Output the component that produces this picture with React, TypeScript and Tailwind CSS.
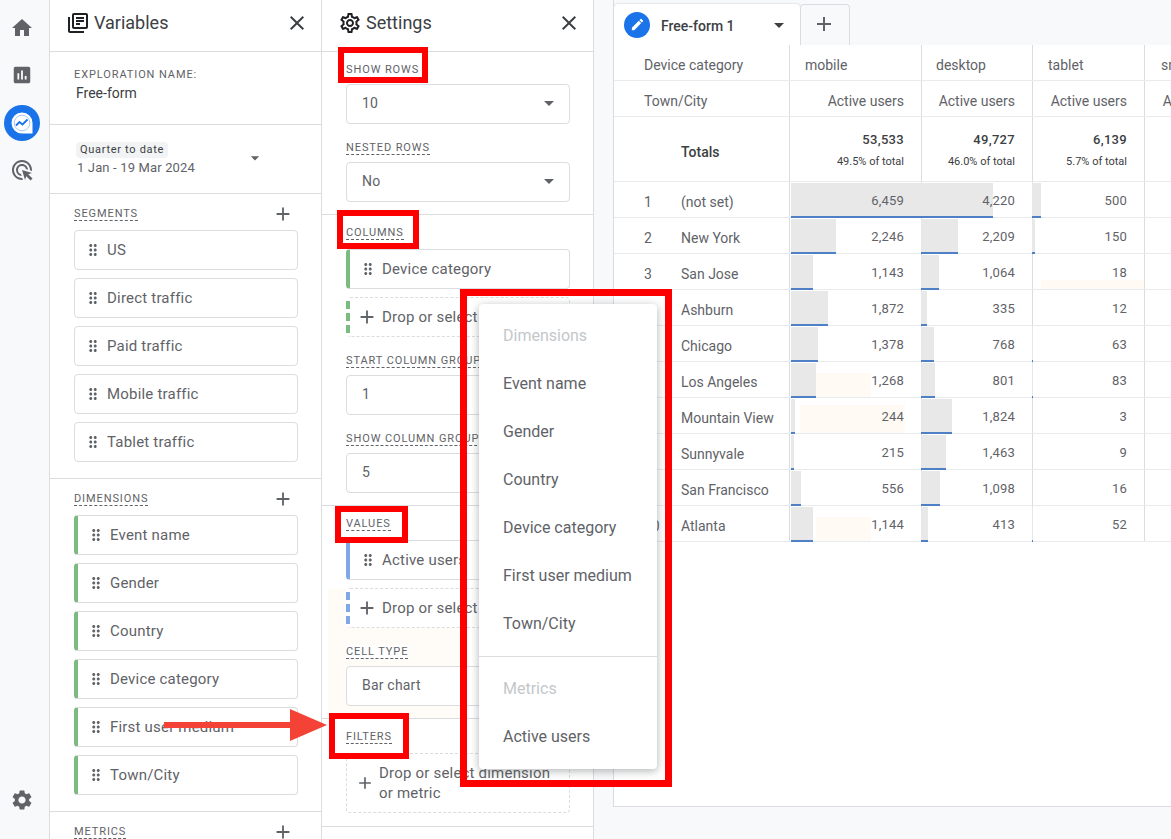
import type { ReactNode } from 'react';
import {
  MdAdd,
  MdAdsClick,
  MdArrowDropDown,
  MdAssessment,
  MdClose,
  MdDragIndicator,
  MdEdit,
  MdHome,
  MdOutlineLibraryBooks,
  MdOutlineSettings,
  MdSettings,
} from 'react-icons/md';

function Label({ children, dashed = true }: { children: ReactNode; dashed?: boolean }) {
  return (
    <div
      className={`w-fit text-[11px] leading-[13px] tracking-[0.9px] uppercase text-[#5f6368] ${
        dashed ? 'border-b border-dashed border-[#5f6368]' : ''
      }`}
    >
      {children}
    </div>
  );
}

function PanelHeader({ icon, title }: { icon: ReactNode; title: string }) {
  return (
    <div className="h-[52px] shrink-0 flex items-center pl-4 pr-3 pb-[6px] border-b border-[#dadce0]">
      <span className="text-[#202124]">{icon}</span>
      <span className="ml-1 text-[18px] text-[#3c4043] flex-1">{title}</span>
      <MdClose size={24} className="text-[#3c4043]" />
    </div>
  );
}

function Chip({ children, color }: { children: string; color?: 'green' | 'blue' }) {
  const edge = color === 'green' ? 'border-l-4 border-l-[#7cbb7f]' : color === 'blue' ? 'border-l-4 border-l-[#7fa9e6]' : '';
  return (
    <div className={`h-10 flex items-center border border-[#dadce0] rounded bg-white pl-[9px] ${edge}`}>
      <MdDragIndicator size={18} className="text-[#5f6368] shrink-0" />
      <span className="ml-[5px] text-[15px] tracking-[0.2px] whitespace-nowrap text-[#5f6368]">{children}</span>
    </div>
  );
}

function SelectBox({ value, arrow = true }: { value: string; arrow?: boolean }) {
  return (
    <div className="h-10 flex items-center justify-between pl-[15px] pr-2 border border-[#dadce0] rounded bg-white">
      <span className="-mt-[2px] text-sm tracking-[0.2px] text-[#5f6368]">{value}</span>
      {arrow && <MdArrowDropDown size={24} className="-mt-[2px] text-[#5f6368]" />}
    </div>
  );
}

function DropZone({ color }: { color: 'green' | 'blue' }) {
  return (
    <div
      className={`h-10 flex items-center pl-[6px] border border-dashed border-[#dadce0] border-l-4 rounded-sm bg-white ${
        color === 'green' ? 'border-l-[#7cbb7f]' : 'border-l-[#7fa9e6]'
      }`}
    >
      <MdAdd size={22} className="text-[#5f6368] shrink-0" />
      <span className="ml-1 text-[15px] tracking-[0.2px] whitespace-nowrap text-[#5f6368]">Drop or select dimension</span>
    </div>
  );
}

function ListSection({ title, items, color }: { title: string; items: string[]; color?: 'green' }) {
  return (
    <div className="pt-[13px] pb-4 pl-6 pr-[23px] border-b border-[#dadce0]">
      <div className="flex items-center justify-between h-[14px]">
        <Label>{title}</Label>
        <MdAdd size={22} className="text-[#5f6368] mr-1" />
      </div>
      <div className="mt-[9px] flex flex-col gap-2">
        {items.map((item) => (
          <Chip key={item} color={color}>
            {item}
          </Chip>
        ))}
      </div>
    </div>
  );
}

function VariablesPanel() {
  return (
    <div className="w-[272px] shrink-0 border-r border-[#dadce0] bg-white flex flex-col">
      <PanelHeader icon={<MdOutlineLibraryBooks size={24} />} title="Variables" />
      <div className="h-[73px] shrink-0 pl-6 pt-4 border-b border-[#dadce0]">
        <Label dashed={false}>Exploration name:</Label>
        <div className="mt-[2px] ml-[2px] text-sm text-[#3c4043]">Free-form</div>
      </div>
      <div className="h-[69px] shrink-0 pl-[27px] pr-[56px] pt-[17px] border-b border-[#dadce0] flex justify-between">
        <div>
          <div className="w-fit h-[16px] px-1 -ml-[1px] bg-[#f1f3f4] rounded-sm text-[11px] leading-[16px] tracking-[0.7px] text-[#3c4043]">
            Quarter to date
          </div>
          <div className="text-[13px] tracking-[0.15px] text-[#5f6368]">1 Jan - 19 Mar 2024</div>
        </div>
        <MdArrowDropDown size={20} className="text-[#5f6368] mt-[6px]" />
      </div>
      <ListSection title="Segments" items={['US', 'Direct traffic', 'Paid traffic', 'Mobile traffic', 'Tablet traffic']} />
      <ListSection
        title="Dimensions"
        color="green"
        items={['Event name', 'Gender', 'Country', 'Device category', 'First user medium', 'Town/City']}
      />
      <div className="pt-[13px] pl-6 pr-[23px]">
        <div className="flex items-center justify-between h-[14px]">
          <Label>Metrics</Label>
          <MdAdd size={22} className="text-[#5f6368] mr-1" />
        </div>
      </div>
    </div>
  );
}

function SettingsPanel() {
  return (
    <div className="w-[272px] shrink-0 border-r border-[#dadce0] bg-white flex flex-col">
      <PanelHeader icon={<MdOutlineSettings size={24} />} title="Settings" />
      <div className="h-[163px] shrink-0 pt-[11px] pl-6 pr-[23px] border-b border-[#dadce0]">
        <Label dashed={false}>Show rows</Label>
        <div className="mt-2">
          <SelectBox value="10" />
        </div>
        <div className="mt-[17px]">
          <Label>Nested rows</Label>
        </div>
        <div className="mt-[7px]">
          <SelectBox value="No" />
        </div>
      </div>
      <div className="h-[291px] shrink-0 pt-[11px] pl-6 pr-[23px] border-b border-[#dadce0]">
        <Label>Columns</Label>
        <div className="mt-[9px] flex flex-col gap-2">
          <Chip color="green">Device category</Chip>
          <DropZone color="green" />
        </div>
        <div className="mt-[17px]">
          <Label>Start column group</Label>
        </div>
        <div className="mt-[7px]">
          <SelectBox value="1" arrow={false} />
        </div>
        <div className="mt-[17px]">
          <Label>Show column groups</Label>
        </div>
        <div className="mt-[7px]">
          <SelectBox value="5" arrow={false} />
        </div>
      </div>
      <div className="relative h-[213px] shrink-0 pt-[11px] pl-6 pr-[23px] border-b border-[#dadce0]">
        <div className="absolute left-[6px] top-[83px] w-[140px] h-[129px] bg-[#fffcf7]" />
        <div className="relative">
          <Label>Values</Label>
          <div className="mt-[9px] flex flex-col gap-2">
            <Chip color="blue">Active users</Chip>
            <DropZone color="blue" />
          </div>
          <div className="mt-[17px] w-fit bg-white">
            <Label>Cell type</Label>
          </div>
          <div className="mt-[7px]">
            <SelectBox value="Bar chart" />
          </div>
        </div>
      </div>
      <div className="h-[108px] shrink-0 pt-[11px] pl-6 pr-[23px] border-b border-[#dadce0]">
        <Label>Filters</Label>
        <div className="mt-[9px] h-[60px] flex items-center pl-[8px] border border-dashed border-[#dadce0] rounded-sm">
          <MdAdd size={20} className="text-[#5f6368] shrink-0" />
          <span className="ml-[4px] text-[15px] leading-5 tracking-[0.2px] whitespace-nowrap text-[#5f6368]">
            Drop or select dimension
            <br />
            or metric
          </span>
        </div>
      </div>
    </div>
  );
}

// faint cream patches that sit in the table cells of the screenshot
const ghostShort = 'left-[26px] right-[50px] top-[11px] bottom-0';
const ghostWide = 'left-[10px] right-[16px] top-[7px] bottom-0';
const ghostLow = 'left-[8px] right-0 top-[26px] bottom-0';

const rows = [
  { n: '1', city: '(not set)', a: '6,459', ab: 202, b: '4,220', bb: 0, c: '500', cb: 9 },
  { n: '2', city: 'New York', a: '2,246', ab: 45, b: '2,209', bb: 37, c: '150', cb: 3 },
  { n: '3', city: 'San Jose', a: '1,143', ab: 22, b: '1,064', bb: 18, c: '18', cb: 0, ghostC: ghostLow },
  { n: '4', city: 'Ashburn', a: '1,872', ab: 37, b: '335', bb: 6, c: '12', cb: 0 },
  { n: '5', city: 'Chicago', a: '1,378', ab: 27, b: '768', bb: 13, c: '63', cb: 1 },
  { n: '6', city: 'Los Angeles', a: '1,268', ab: 25, b: '801', bb: 14, c: '83', cb: 1, ghostA: ghostShort },
  { n: '7', city: 'Mountain View', a: '244', ab: 4, b: '1,824', bb: 31, c: '3', cb: 0, ghostA: ghostWide },
  { n: '8', city: 'Sunnyvale', a: '215', ab: 3, b: '1,463', bb: 25, c: '9', cb: 0 },
  { n: '9', city: 'San Francisco', a: '556', ab: 10, b: '1,098', bb: 19, c: '16', cb: 0 },
  { n: '10', city: 'Atlanta', a: '1,144', ab: 22, b: '413', bb: 7, c: '52', cb: 1, ghostA: ghostShort },
];

const grid = 'grid grid-cols-[176px_132px_111px_112px_112px] w-[643px] border-b border-[#e8eaed]';
const leftCell = 'relative border-r border-[#dadce0] flex items-center pt-1';
const rightCell = 'relative border-r border-[#dadce0] flex items-center justify-end pr-[17px] pt-1';

function BarCell({ value, width, left, ghost }: { value: string; width: number; left: number; ghost?: string }) {
  return (
    <div className="relative border-r border-[#dadce0] flex items-center justify-end pr-[17px]">
      {ghost && <div className={`absolute bg-[#fffbf4] ${ghost}`} />}
      {width > 0 && (
        <div
          className="absolute top-[1px] -bottom-[1px] bg-[#e8e8e8] border-b-2 border-[#4f7fc4]"
          style={{ width, left }}
        />
      )}
      <span className="relative mt-1 text-[13px] tracking-[0.2px] text-[#5f6368]">{value}</span>
    </div>
  );
}

function DataTable() {
  return (
    <div className="flex-1 bg-white text-[#5f6368] text-sm">
      <div className={`${grid} h-9`}>
        <div className={`${leftCell} pl-[30px]`}>Device category</div>
        <div className={`${leftCell} pl-[15px]`}>mobile</div>
        <div className={`${leftCell} pl-[14px]`}>desktop</div>
        <div className={`${leftCell} pl-[15px]`}>tablet</div>
        <div className={`${leftCell} pl-[16px] whitespace-nowrap`}>smart tv</div>
      </div>
      <div className={`${grid} h-9`}>
        <div className={`${leftCell} pl-[30px]`}>Town/City</div>
        <div className={rightCell}>Active users</div>
        <div className={rightCell}>Active users</div>
        <div className={rightCell}>Active users</div>
        <div className={rightCell}>Active users</div>
      </div>
      <div className={`${grid} h-[65px]`}>
        <div className="border-r border-[#dadce0] flex items-center pl-[67px] pt-[5px] font-medium text-[#3c4043]">Totals</div>
        {[
          ['53,533', '49.5% of total'],
          ['49,727', '46.0% of total'],
          ['6,139', '5.7% of total'],
        ].map(([total, share]) => (
          <div key={total} className="border-r border-[#dadce0] flex flex-col items-end justify-center pr-[17px] pt-[3px]">
            <div className="text-[13px] tracking-[0.3px] font-medium text-[#3c4043]">{total}</div>
            <div className="mt-[4px] text-[11px] text-[#3c4043]">{share}</div>
          </div>
        ))}
        <div className="border-r border-[#dadce0]" />
      </div>
      {rows.map((row) => (
        <div key={row.n} className={`${grid} h-9`}>
          <div className="border-r border-[#dadce0] flex items-center pl-[30px] pt-1 text-[#5f6368]">
            <span className="w-[37px]">{row.n}</span>
            <span>{row.city}</span>
          </div>
          <BarCell value={row.a} width={row.ab} left={1} ghost={row.ghostA} />
          <BarCell value={row.b} width={row.bb} left={-1} />
          <BarCell value={row.c} width={row.cb} left={-1} ghost={row.ghostC} />
          <div className="border-r border-[#dadce0]" />
        </div>
      ))}
    </div>
  );
}

function Overlays() {
  const boxes = [
    'left-[338px] top-[47px] w-[90px] h-[36px]',
    'left-[337px] top-[210px] w-[82px] h-[39px]',
    'left-[335px] top-[506px] w-[73px] h-[37px]',
    'left-[329px] top-[713px] w-[80px] h-[46px]',
  ];
  const menu = ['Event name', 'Gender', 'Country', 'Device category', 'First user medium', 'Town/City'];
  return (
    <>
      <div className="absolute left-[479px] top-[304px] w-[178px] h-[465px] bg-white rounded shadow-[0_2px_8px_rgba(60,64,67,0.4)] text-base text-[#5f6368]">
        <div className="h-12 mt-2 flex items-center pl-6 text-[#c4c7ca]">Dimensions</div>
        {menu.map((item) => (
          <div key={item} className="h-12 flex items-center pl-6 whitespace-nowrap">
            {item}
          </div>
        ))}
        <div className="mt-2 border-t border-[#dadce0]" />
        <div className="h-12 mt-2 flex items-center pl-6 text-[#c4c7ca]">Metrics</div>
        <div className="h-12 flex items-center pl-6">Active users</div>
      </div>
      {boxes.map((box) => (
        <div key={box} className={`absolute ${box} border-[6px] border-[#ff0000]`} />
      ))}
      <div className="absolute left-[460px] top-[289px] w-[212px] h-[498px] border-[7px] border-[#ff0000]" />
      <svg className="absolute left-[164px] top-[708px]" width="164" height="34" viewBox="0 0 164 34">
        <rect x="0" y="14" width="128" height="6" fill="#f44336" />
        <path d="M126 1 L163 17 L126 33 Z" fill="#f44336" />
      </svg>
    </>
  );
}

export default function App() {
  return (
    <div className="relative h-[839px] w-[1171px] overflow-hidden flex bg-[#f8f9fa] font-['Roboto',sans-serif]">
      <div className="w-[50px] shrink-0 pr-[6px] border-r border-[#dadce0] flex flex-col items-center text-[#5f6368]">
        <MdHome size={24} className="mt-4" />
        <MdAssessment size={22} className="mt-6" />
        <svg className="mt-[19px]" width="36" height="36" viewBox="0 0 36 36">
          <circle cx="18" cy="18" r="18" fill="#1a73e8" />
          <path d="M18 7.500a10.500 10.500 0 1 0 0 21h10.500V18A10.500 10.500 0 0 0 18 7.500z" fill="#fff" />
          <circle cx="18" cy="18" r="7.800" fill="none" stroke="#a9c8f7" strokeWidth="1" />
          <path d="M12 20.500l3.500-3.500 3 2.500 5-5" fill="none" stroke="#1a73e8" strokeWidth="1.800" />
        </svg>
        <MdAdsClick size={24} className="mt-[17px]" />
        <MdSettings size={24} className="mt-auto mb-[27px]" />
      </div>
      <VariablesPanel />
      <SettingsPanel />
      <div className="ml-[19px] flex-1 min-w-0 h-[807px] flex flex-col border-l border-b border-[#dadce0] bg-white overflow-hidden">
        <div className="h-[45px] shrink-0 bg-[#f8f9fa] flex items-end">
          <div className="w-[186px] h-[41px] bg-white rounded-t flex items-center pl-[10px] pt-[2px] shadow-[0_0_2px_rgba(60,64,67,0.3)]">
            <span className="w-[26px] h-[26px] -mt-[2px] rounded-full bg-[#1a73e8] flex items-center justify-center">
              <MdEdit size={15} className="text-white" />
            </span>
            <span className="ml-[11px] text-sm font-medium text-[#3c4043] flex-1">Free-form 1</span>
            <MdArrowDropDown size={24} className="text-[#3c4043] mr-[9px] -mt-[2px]" />
          </div>
          <div className="w-[50px] h-[41px] pr-[2px] pb-[2px] rounded-t bg-[#f8f9fa] border border-[#dadce0] border-b-0 flex items-center justify-center">
            <MdAdd size={24} className="text-[#5f6368]" />
          </div>
        </div>
        <DataTable />
      </div>
      <Overlays />
    </div>
  );
}
